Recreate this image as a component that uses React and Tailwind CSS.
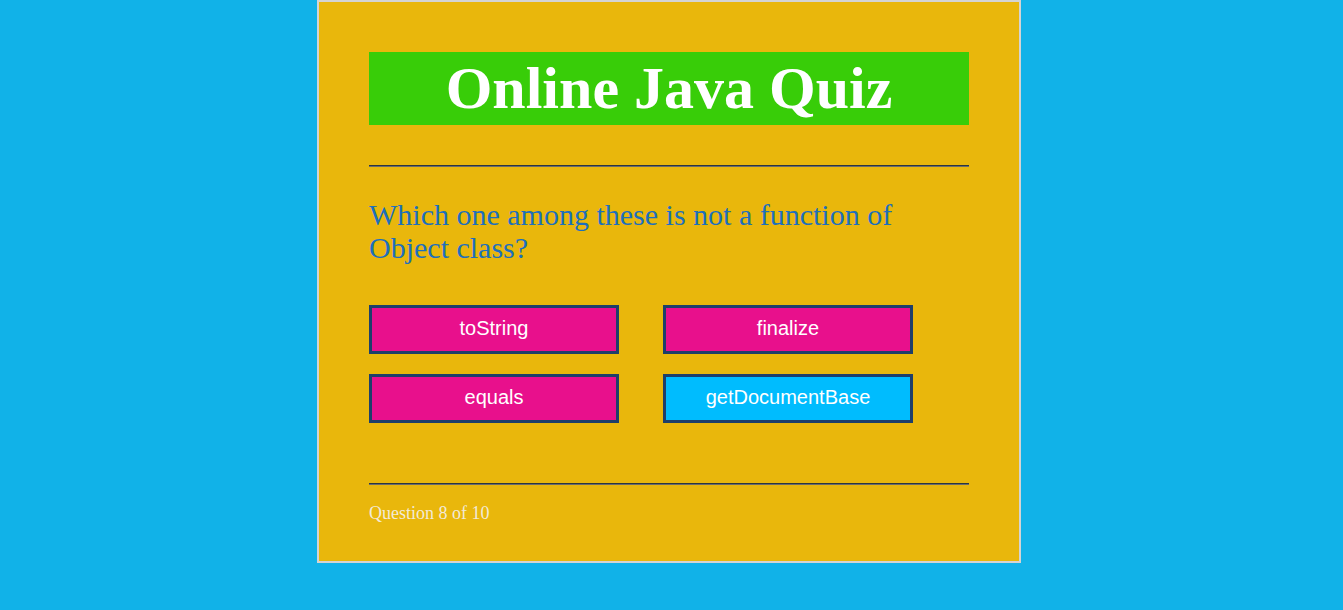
import React from "react";

const options = [
  { label: "toString", selected: false },
  { label: "finalize", selected: false },
  { label: "equals", selected: false },
  { label: "getDocumentBase", selected: true },
];

const Divider = ({ className }) => (
  <div className={`h-[2px] border-t border-[#2b3540] border-b border-b-[#6b6b6b] ${className}`} />
);

const App = () => {
  return (
    <div className="min-h-[610px] w-full bg-[#11b2e8]">
      {/* Quiz card */}
      <div className="ml-[317px] w-[704px] h-[563px] border-2 border-[#d4d4d4] bg-[#e9b70c] px-[50px] pt-[50px]">
        <h1 className="h-[73px] bg-[#38cd08] text-center text-[60px] font-bold leading-[73px] text-white font-['Liberation_Serif',serif]">
          Online Java Quiz
        </h1>

        <Divider className="mt-[40px]" />

        <p className="mt-[31px] text-[30px] leading-[33px] text-[#1d6fbc] font-['Liberation_Serif',serif]">
          Which one among these is not a function of Object class?
        </p>

        {/* Answer buttons */}
        <div className="mt-[41px] grid grid-cols-[250px_250px] gap-x-[44px] gap-y-[20px]">
          {options.map((opt) => (
            <button
              key={opt.label}
              className={`h-[49px] w-[250px] border-[3px] border-[#1e3f6a] pb-[3px] text-[20px] text-white font-['Liberation_Sans',Arial,sans-serif] ${
                opt.selected ? "bg-[#00bcfe]" : "bg-[#e8108c]"
              }`}
            >
              {opt.label}
            </button>
          ))}
        </div>

        <Divider className="mt-[60px]" />

        <p className="mt-[15px] text-[18px] text-[#f2ead8] font-['Liberation_Serif',serif]">
          Question 8 of 10
        </p>
      </div>
    </div>
  );
};

export default App;
